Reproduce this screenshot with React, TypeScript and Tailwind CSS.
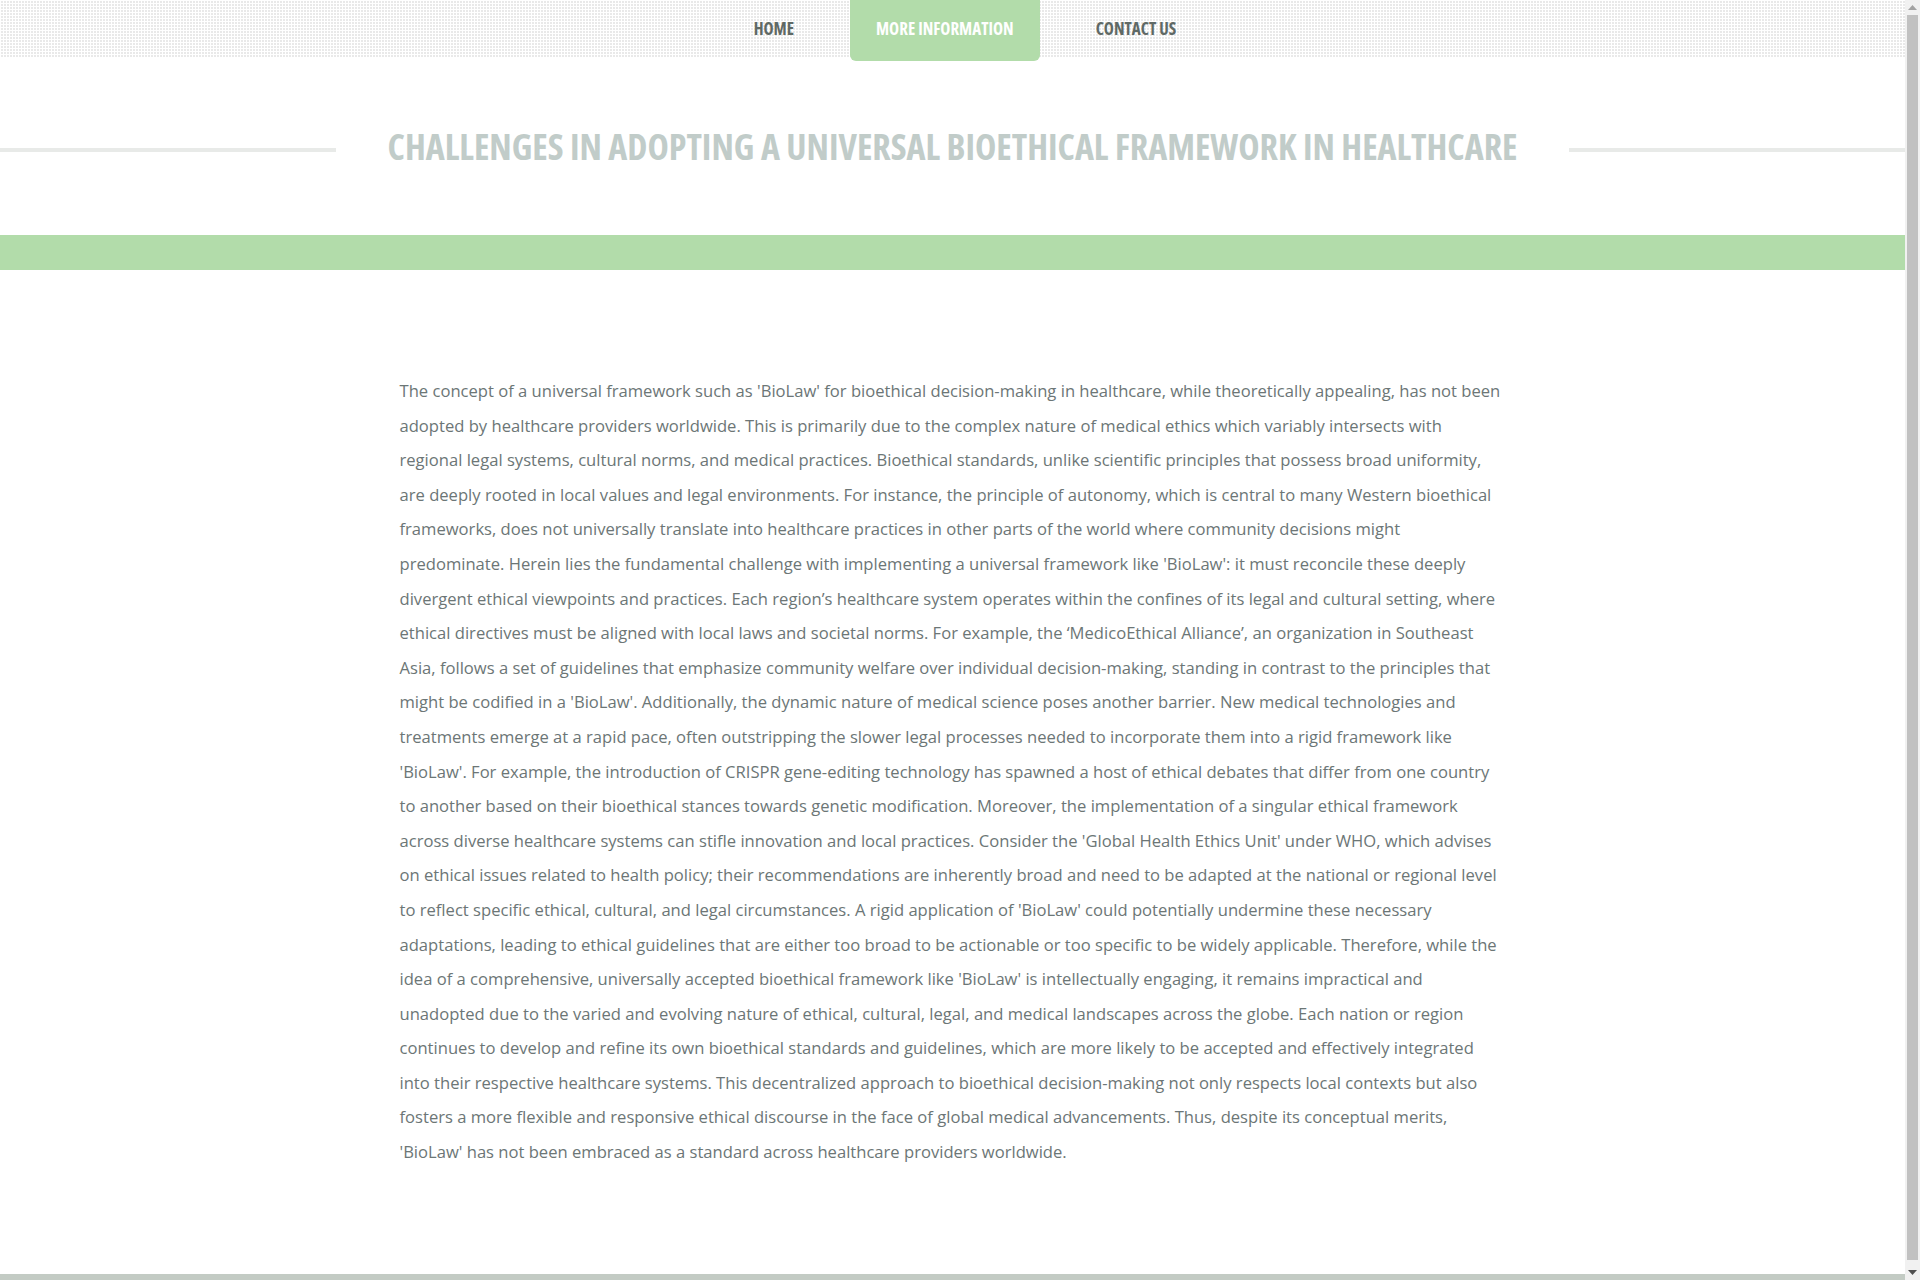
import React from "react";

const BODY =
  "The concept of a universal framework such as 'BioLaw' for bioethical decision-making in healthcare, while theoretically appealing, has not been adopted by healthcare providers worldwide. This is primarily due to the complex nature of medical ethics which variably intersects with regional legal systems, cultural norms, and medical practices. Bioethical standards, unlike scientific principles that possess broad uniformity, are deeply rooted in local values and legal environments. For instance, the principle of autonomy, which is central to many Western bioethical frameworks, does not universally translate into healthcare practices in other parts of the world where community decisions might predominate. Herein lies the fundamental challenge with implementing a universal framework like 'BioLaw': it must reconcile these deeply divergent ethical viewpoints and practices. Each region\u2019s healthcare system operates within the confines of its legal and cultural setting, where ethical directives must be aligned with local laws and societal norms. For example, the \u2018MedicoEthical Alliance\u2019, an organization in Southeast Asia, follows a set of guidelines that emphasize community welfare over individual decision-making, standing in contrast to the principles that might be codified in a 'BioLaw'. Additionally, the dynamic nature of medical science poses another barrier. New medical technologies and treatments emerge at a rapid pace, often outstripping the slower legal processes needed to incorporate them into a rigid framework like 'BioLaw'. For example, the introduction of CRISPR gene-editing technology has spawned a host of ethical debates that differ from one country to another based on their bioethical stances towards genetic modification. Moreover, the implementation of a singular ethical framework across diverse healthcare systems can stifle innovation and local practices. Consider the 'Global Health Ethics Unit' under WHO, which advises on ethical issues related to health policy; their recommendations are inherently broad and need to be adapted at the national or regional level to reflect specific ethical, cultural, and legal circumstances. A rigid application of 'BioLaw' could potentially undermine these necessary adaptations, leading to ethical guidelines that are either too broad to be actionable or too specific to be widely applicable. Therefore, while the idea of a comprehensive, universally accepted bioethical framework like 'BioLaw' is intellectually engaging, it remains impractical and unadopted due to the varied and evolving nature of ethical, cultural, legal, and medical landscapes across the globe. Each nation or region continues to develop and refine its own bioethical standards and guidelines, which are more likely to be accepted and effectively integrated into their respective healthcare systems. This decentralized approach to bioethical decision-making not only respects local contexts but also fosters a more flexible and responsive ethical discourse in the face of global medical advancements. Thus, despite its conceptual merits, 'BioLaw' has not been embraced as a standard across healthcare providers worldwide.";

function Scrollbar() {
  return (
    <div className="flex h-screen w-[15px] shrink-0 flex-col bg-[#f1f1f1]">
      <div className="flex h-[15px] items-center justify-center">
        <svg width="9" height="5" viewBox="0 0 9 5">
          <polygon points="4.5,0 9,5 0,5" fill="#a3a3a3" />
        </svg>
      </div>
      <div className="mx-[2px] flex-1 bg-[#c1c1c1]" />
      <div className="flex h-[20px] items-center justify-center pt-[5px]">
        <svg width="9" height="5" viewBox="0 0 9 5">
          <polygon points="0,0 9,0 4.5,5" fill="#505050" />
        </svg>
      </div>
    </div>
  );
}

export default function App() {
  return (
    <div className="flex h-screen overflow-hidden bg-white font-['Open_Sans',sans-serif]">
      <div className="h-screen flex-1 overflow-hidden">
        {/* Nav */}
        <nav className="h-[57px] bg-[#e9e9e9] [background-image:linear-gradient(90deg,#ffffff_1px,transparent_1px),linear-gradient(#ffffff_1px,transparent_1px)] [background-size:3px_3px]">
          <ul className="flex justify-center items-start gap-[30px] pl-[25px]">
            <li>
              <a className="flex h-[57px] items-center px-[26px] text-[17px] font-bold font-stretch-condensed uppercase text-[#5f6965]">
                Home
              </a>
            </li>
            <li>
              <a className="flex h-[61px] items-center pb-[4px] px-[26px] rounded-b-[6px] bg-[#b2dcaa] text-[17px] font-bold font-stretch-condensed uppercase text-white">
                More Information
              </a>
            </li>
            <li>
              <a className="flex h-[57px] items-center px-[26px] text-[17px] font-bold font-stretch-condensed uppercase text-[#5f6965]">
                Contact Us
              </a>
            </li>
          </ul>
        </nav>

        {/* Title */}
        <section className="pt-[66px] pb-[64px]">
          <div className="flex items-center">
            <div className="h-[4px] flex-1 bg-[#e8eae8] mt-[6px]" />
            <h1 className="px-[52px] text-[36px] leading-[48px] font-bold font-stretch-condensed uppercase text-[#c1ccc9] whitespace-nowrap">
              Challenges in Adopting a Universal Bioethical Framework in Healthcare
            </h1>
            <div className="h-[4px] flex-1 bg-[#e8eae8] mt-[6px]" />
          </div>
        </section>

        {/* Green band */}
        <div className="h-[35px] bg-[#b2dcaa]" />

        {/* Content */}
        <main className="pt-[104px] pb-[104px]">
          <div className="mx-auto w-[1106px]">
            <p className="text-[16.6px] leading-[34.6px] text-[#6c7676]">{BODY}</p>
          </div>
        </main>

        {/* Footer */}
        <footer className="h-[10px] bg-[#c3cbc4]" />
      </div>
      <Scrollbar />
    </div>
  );
}
